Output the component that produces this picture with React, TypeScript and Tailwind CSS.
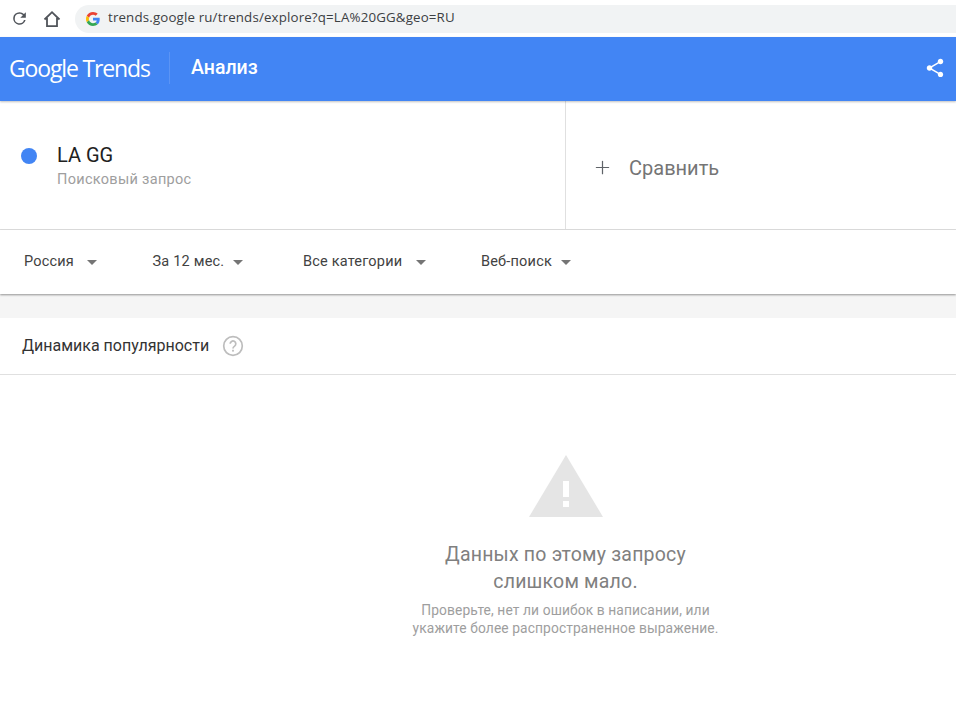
import React from 'react';
import { Plus } from 'lucide-react';

const filters = [
  { label: 'Россия', width: 'w-[128.500px]', gap: 'ml-[13px]' },
  { label: 'За 12 мес.', width: 'w-[150.500px]', gap: 'ml-[9px]' },
  { label: 'Все категории', width: 'w-[178px]', gap: 'ml-[14px]' },
  { label: 'Веб-поиск', width: 'w-auto', gap: 'ml-[9px]' },
];

const App: React.FC = () => {
  return (
    <div className="h-[711px] w-[956px] overflow-hidden bg-white font-['Roboto',sans-serif]">
      {/* Browser bar */}
      <div className="flex h-[37px] items-center bg-white pl-[10px]">
        <svg width="19" height="19" viewBox="0 0 24 24" fill="#50545a">
          <path d="M17.650 6.350A7.960 7.960 0 0 0 12 4a8 8 0 1 0 7.730 10h-2.080A6 6 0 1 1 12 6c1.660 0 3.140.69 4.220 1.780L13 11h7V4l-2.350 2.350z" />
        </svg>
        <svg className="ml-[14px]" width="18" height="18" viewBox="0 0 18 18" fill="none" stroke="#50545a" strokeWidth="1.800" strokeLinejoin="miter">
          <path d="M1.500 9.500 9 2.200l7.500 7.300M4 8v8.200h10V8" />
        </svg>
        <div className="ml-[14px] flex h-[28px] flex-1 items-center rounded-l-full bg-[#f1f3f4] pl-[11px]">
          <svg width="14" height="14" viewBox="0 0 48 48">
            <path fill="#EA4335" d="M24 9.500c3.500 0 6.700 1.200 9.200 3.600l6.900-6.900C35.900 2.400 30.500 0 24 0 14.600 0 6.500 5.400 2.600 13.200l8 6.200C12.500 13.700 17.800 9.500 24 9.500z" />
            <path fill="#4285F4" d="M47 24.500c0-1.600-.1-3.100-.4-4.500H24v9h12.900c-.6 3-2.200 5.500-4.700 7.200l7.700 6c4.500-4.200 7.100-10.300 7.100-17.700z" />
            <path fill="#FBBC05" d="M10.600 28.600c-.5-1.400-.8-3-.8-4.600s.3-3.200.8-4.600l-8-6.200C.9 16.500 0 20.100 0 24s.9 7.500 2.600 10.800l8-6.200z" />
            <path fill="#34A853" d="M24 48c6.500 0 11.900-2.100 15.900-5.800l-7.700-6c-2.200 1.500-4.900 2.300-8.200 2.300-6.200 0-11.500-4.200-13.400-9.900l-8 6.200C6.500 42.600 14.600 48 24 48z" />
          </svg>
          <span className="ml-[8px] -translate-y-[1px] text-[13.300px] tracking-[0.16px] text-[#3c4043] font-['Open_Sans',sans-serif]">trends.google ru/trends/explore?q=LA%20GG&amp;geo=RU</span>
        </div>
      </div>

      {/* Header */}
      <div className="relative z-10 flex h-[64px] items-center bg-[#4285f4] pb-[2px] shadow-[0_1px_2px_rgba(0,0,0,0.25)]">
        <span className="ml-[9px] w-[160px] text-[23px] leading-none tracking-[-1.150px] text-white font-['Open_Sans',sans-serif]">Google Trends</span>
        <div className="h-[32px] w-px bg-[#5b94f5]" />
        <span className="ml-[21px] text-[19.500px] font-medium text-white">Анализ</span>
        <svg className="ml-auto mr-[10px]" width="22" height="22" viewBox="0 0 24 24" fill="white">
          <path d="M18 16.080c-.76 0-1.440.3-1.960.77L8.910 12.700c.05-.23.090-.46.090-.7s-.04-.47-.09-.7l7.050-4.110c.54.5 1.250.81 2.040.81 1.660 0 3-1.340 3-3s-1.340-3-3-3-3 1.340-3 3c0 .24.040.47.090.7L8.040 9.810C7.500 9.310 6.790 9 6 9c-1.660 0-3 1.340-3 3s1.340 3 3 3c.79 0 1.500-.31 2.040-.81l7.120 4.160c-.05.21-.08.43-.08.65 0 1.610 1.310 2.920 2.920 2.920 1.610 0 2.920-1.310 2.920-2.920s-1.310-2.920-2.920-2.920z" />
        </svg>
      </div>

      {/* Query and compare */}
      <div className="flex h-[129px] border-b border-[#e0e0e0]">
        <div className="w-[566px] border-r border-[#e0e0e0] pl-[21px] pt-[44px]">
          <div className="flex items-start">
            <span className="mt-[3px] h-4 w-4 rounded-full bg-[#4285f4]" />
            <div className="ml-[20px]">
              <div className="text-[20px] leading-[20px] text-[#212121]">LA GG</div>
              <div className="mt-[5px] text-[14.500px] leading-[20px] tracking-[0.3px] text-[#9e9e9e]">Поисковый запрос</div>
            </div>
          </div>
        </div>
        <div className="flex flex-1 items-center pl-[26px] pt-[6px]">
          <Plus size={21} strokeWidth={1.400} className="-translate-y-[1px] text-[#5f6368]" />
          <span className="ml-[16px] text-[20px] text-[#757575]">Сравнить</span>
        </div>
      </div>

      {/* Filters */}
      <div className="relative z-10 flex h-[64px] items-center bg-white pl-[24px] shadow-[0_1px_2px_rgba(0,0,0,0.4)]">
        {filters.map((f) => (
          <div key={f.label} className={`flex items-center ${f.width}`}>
            <span className="text-[14.500px] tracking-[0.2px] text-[#424242]">{f.label}</span>
            <span className={`${f.gap} h-0 w-0 border-x-[5.5px] border-t-[5.5px] border-x-transparent border-t-[#757575]`} />
          </div>
        ))}
      </div>

      {/* Gap band */}
      <div className="h-[24px] bg-[#f5f5f5]" />

      {/* Card head */}
      <div className="flex h-[57px] items-center border-b border-[#e0e0e0] pl-[22px]">
        <span className="text-[16px] text-[#333333]">Динамика популярности</span>
        <svg className="ml-[13px]" width="22" height="22" viewBox="0 0 22 22" fill="none">
          <circle cx="11" cy="11" r="9.300" stroke="#bdbdbd" strokeWidth="1.700" />
          <path d="M8.200 8.800a2.800 2.800 0 1 1 4.400 2.300c-1 .7-1.600 1.200-1.600 2.400" stroke="#bdbdbd" strokeWidth="1.700" />
          <rect x="10.100" y="14.800" width="1.800" height="1.800" fill="#bdbdbd" />
        </svg>
      </div>

      {/* Empty state */}
      <div className="flex flex-col items-center pl-[175px] pt-[80px] text-center">
        <svg width="74" height="62" viewBox="0 0 74 62">
          <path d="M37 0 74 62H0z" fill="#e5e5e5" />
          <rect x="34" y="26" width="6" height="16" fill="white" />
          <rect x="34" y="46" width="6" height="6" fill="white" />
        </svg>
        <div className="mt-[24px] w-[300px] text-[19.500px] leading-[27px] tracking-[0.2px] text-[#808080]">
          Данных по этому запросу<br />слишком мало.
        </div>
        <div className="mt-[6px] whitespace-nowrap text-[13.800px] leading-[18px] tracking-[0.1px] text-[#9e9e9e]">
          Проверьте, нет ли ошибок в написании, или<br />укажите более распространенное выражение.
        </div>
      </div>
    </div>
  );
};

export default App;
